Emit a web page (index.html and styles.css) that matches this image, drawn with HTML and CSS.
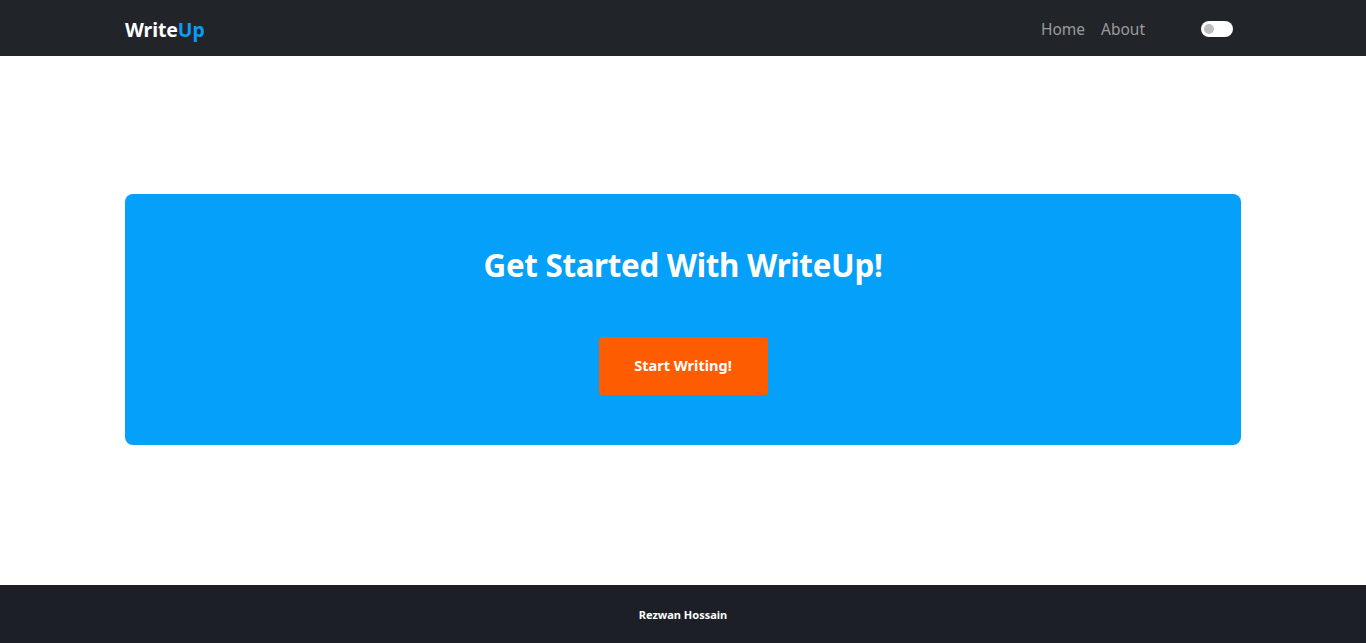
FILE: index.html
```html
<!DOCTYPE html>
<html lang="en">
<head>
<meta charset="utf-8">
<title>WriteUp</title>
<link rel="stylesheet" href="styles.css">
</head>
<body>
<div class="page">
  <nav class="navbar">
    <div class="container nav-inner">
      <a class="brand" href="#">Write<span class="brand-up">Up</span></a>
      <div class="nav-right">
        <a class="nav-link" href="#">Home</a>
        <a class="nav-link" href="#">About</a>
        <span class="switch"><span class="knob"></span></span>
      </div>
    </div>
  </nav>
  <main class="main">
    <div class="container">
      <section class="hero">
        <h1 class="hero-title">Get Started With WriteUp!</h1>
        <a class="btn-start" href="#">Start Writing!</a>
      </section>
    </div>
  </main>
  <footer class="footer">Rezwan Hossain</footer>
</div>
</body>
</html>
```

FILE: styles.css
```css
* { box-sizing: border-box; }
html, body { margin: 0; padding: 0; }
body {
  font-family: "Noto Sans", "Open Sans", sans-serif;
  background: #fff;
  color: #212529;
}
a { text-decoration: none; }
.page {
  min-height: 643px;
  height: 643px;
  display: flex;
  flex-direction: column;
}
.container {
  width: 1140px;
  margin: 0 auto;
  padding: 0 12px;
}
.navbar {
  background: #212429;
  height: 56px;
  flex: none;
}
.nav-inner {
  height: 56px;
  display: flex;
  align-items: center;
  justify-content: space-between;
}
.brand {
  color: #fff;
  font-weight: 700;
  font-size: 19.5px;
  letter-spacing: -0.1px;
  padding-top: 3px;
}
.brand-up { color: #0a9bf5; }
.nav-right {
  display: flex;
  align-items: center;
  padding-right: 8px;
  padding-top: 2px;
}
.nav-link {
  color: rgba(255,255,255,0.55);
  font-size: 15.5px;
  margin-left: 16px;
  line-height: 24px;
}
.nav-link:first-child { margin-left: 0; }
.nav-link + .nav-link { margin-left: 16px; }
.switch {
  width: 32px;
  height: 16px;
  border-radius: 8px;
  background: #fff;
  margin-left: 56px;
  display: flex;
  align-items: center;
  padding-left: 3px;
}
.knob {
  width: 10px;
  height: 10px;
  border-radius: 50%;
  background: #bfbfbf;
}
.main {
  flex: 1;
  display: flex;
  align-items: center;
  padding-bottom: 2px;
}
.hero {
  background: #05a0f9;
  border-radius: 8px;
  height: 251px;
  display: flex;
  flex-direction: column;
  align-items: center;
  padding-top: 49px;
}
.hero-title {
  margin: 0;
  color: #fff;
  font-size: 31.3px;
  font-weight: 700;
  line-height: 44px;
  letter-spacing: -0.3px;
}
.btn-start {
  margin-top: 50px;
  width: 169px;
  height: 58px;
  background: #fd5c00;
  border-radius: 3px;
  color: #fff;
  font-weight: 700;
  font-size: 14.5px;
  display: flex;
  align-items: center;
  justify-content: center;
  padding-bottom: 3px;
}
.footer {
  background: #1c1f26;
  height: 58px;
  flex: none;
  display: flex;
  align-items: center;
  justify-content: center;
  color: #fff;
  font-weight: 700;
  font-size: 11px;
}
```
